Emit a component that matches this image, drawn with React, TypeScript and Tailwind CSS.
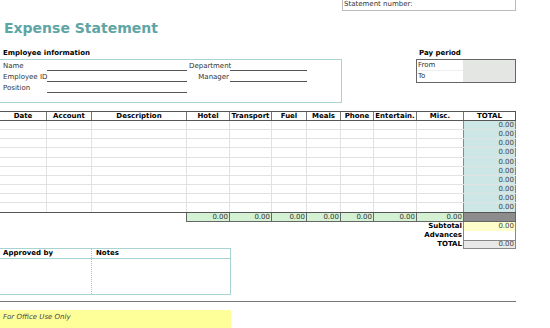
import React from "react";

const columns = [
  "Date",
  "Account",
  "Description",
  "Hotel",
  "Transport",
  "Fuel",
  "Meals",
  "Phone",
  "Entertain.",
  "Misc.",
  "TOTAL",
];

// row heights so the light rules land where the sheet's rows do
const rowHeights = [
  "h-[9px]",
  "h-[9px]",
  "h-[9px]",
  "h-[10px]",
  "h-[9px]",
  "h-[9px]",
  "h-[9px]",
  "h-[9px]",
  "h-[9px]",
  "h-[10px]",
];

const gridCols =
  "grid grid-cols-[47px_45px_95px_43px_42px_35px_34px_33px_43px_47px_52px]";

const Field = ({ label, line, wide }: { label: string; line: string; wide?: boolean }) => (
  <div className="flex items-end whitespace-nowrap">
    <span className={wide ? "w-[41px] text-right pr-[1px]" : "w-[47px] pl-[3px]"}>{label}</span>
    <div className={`${line} h-[11px] border-b border-[#555]`} />
  </div>
);

export default function App() {
  return (
    <div className="w-[550px] h-[328px] overflow-hidden bg-white text-[7px] leading-[9px] text-[#333] font-['DejaVu_Sans',Verdana,sans-serif]">
      {/* Statement number */}
      <div className="flex">
        <div className="ml-[342px] w-[174px] h-[11px] border-x border-b border-[#bbb] pl-[1px] leading-[9px]">
          Statement number:
        </div>
      </div>

      {/* Title */}
      <h1 className="mt-[9px] pl-[4px] text-[14px] leading-[16px] font-bold text-[#5ea5a5]">
        Expense Statement
      </h1>

      {/* Employee info + pay period */}
      <div className="flex mt-[13px]">
        <div className="w-[342px]">
          <div className="h-[10px] pl-[3px] font-bold text-black">Employee information</div>
          <div className="h-[44px] border-y border-r border-[#a9d4d4]">
            <div className="flex">
              <Field label="Name" line="w-[140px]" />
              <div className="w-[2px]" />
              <Field label="Department" line="w-[77px]" wide />
            </div>
            <div className="flex">
              <Field label="Employee ID" line="w-[140px]" />
              <div className="w-[2px]" />
              <Field label="Manager" line="w-[77px]" wide />
            </div>
            <Field label="Position" line="w-[140px]" />
          </div>
        </div>
        <div className="ml-[74px] w-[100px]">
          <div className="h-[10px] pl-[3px] font-bold text-black">Pay period</div>
          <div className="h-[24px] border border-[#666] flex">
            <div className="w-[46px]">
              <div className="h-[11px] border-b border-[#eee] pl-[1px] leading-[10px]">From</div>
              <div className="h-[11px] pl-[1px] leading-[10px]">To</div>
            </div>
            <div className="flex-1 bg-[#e4e6e4]" />
          </div>
        </div>
      </div>

      {/* Expense table */}
      <div className="mt-[8px] w-[516px]">
        <div className={`${gridCols} h-[10px] border-y border-[#555]`}>
          {columns.map((c, i) => (
            <div
              key={c}
              className={`text-center font-bold text-black leading-[8px] ${
                i < columns.length - 1 ? "border-r border-[#777]" : "border-r border-[#555]"
              }`}
            >
              {c}
            </div>
          ))}
        </div>
        {rowHeights.map((h, r) => (
          <div
            key={r}
            className={`${gridCols} ${h} ${
              r === rowHeights.length - 1 ? "border-b border-[#555]" : "border-b border-[#e2e2e2]"
            }`}
          >
            {columns.map((c, i) =>
              i === columns.length - 1 ? (
                <div
                  key={c}
                  className="bg-[#cde6e6] border-r border-[#888] text-right pr-[1px] leading-[8px] text-[#444]"
                >
                  0.00
                </div>
              ) : (
                <div
                  key={c}
                  className={i === columns.length - 2 ? "border-r border-[#888]" : "border-r border-[#e2e2e2]"}
                />
              )
            )}
          </div>
        ))}

        {/* Column totals */}
        <div className={`${gridCols} h-[9px]`}>
          <div />
          <div />
          <div className="border-r border-[#666]" />
          {columns.slice(3, 10).map((c) => (
            <div
              key={c}
              className="bg-[#d4f1d4] border-r border-b border-[#666] text-right pr-[1px] leading-[8px]"
            >
              0.00
            </div>
          ))}
          <div className="bg-[#8c8c8c] border-r border-b border-[#666]" />
        </div>

        {/* Summary */}
        <div className="flex h-[9px] font-bold text-black">
          <div className="w-[463px] text-right pr-[1px]">Subtotal</div>
          <div className="flex-1 bg-[#ffffcc] border-x border-[#888] text-right pr-[1px] font-normal text-[#444]">
            0.00
          </div>
        </div>
        <div className="flex h-[9px] font-bold text-black">
          <div className="w-[463px] text-right pr-[1px]">Advances</div>
          <div className="flex-1 border-x border-[#888]" />
        </div>
        <div className="flex h-[9px] font-bold text-black">
          <div className="w-[463px] text-right pr-[1px]">TOTAL</div>
          <div className="flex-1 bg-[#e8e8e8] border border-[#888] text-right pr-[1px] font-normal text-[#444] leading-[7px]">
            0.00
          </div>
        </div>
      </div>

      {/* Approval */}
      <div className="-mt-[1px] w-[231px] h-[47px] border-y border-r border-[#a9d4d4] flex flex-col">
        <div className="h-[10px] border-b border-[#a9d4d4] flex font-bold text-black">
          <div className="w-[92px] pl-[3px] border-r border-dotted border-[#bbb]">Approved by</div>
          <div className="pl-[4px]">Notes</div>
        </div>
        <div className="flex-1 flex">
          <div className="w-[92px] border-r border-dotted border-[#bbb]" />
        </div>
      </div>

      <div className="mt-[6px] w-[516px] border-t border-[#777]" />

      {/* Office use */}
      <div className="mt-[8px] w-[231px] h-[19px] bg-[#ffff99] pl-[3px] pt-[3px] italic text-[#444]">
        For Office Use Only
      </div>
    </div>
  );
}
